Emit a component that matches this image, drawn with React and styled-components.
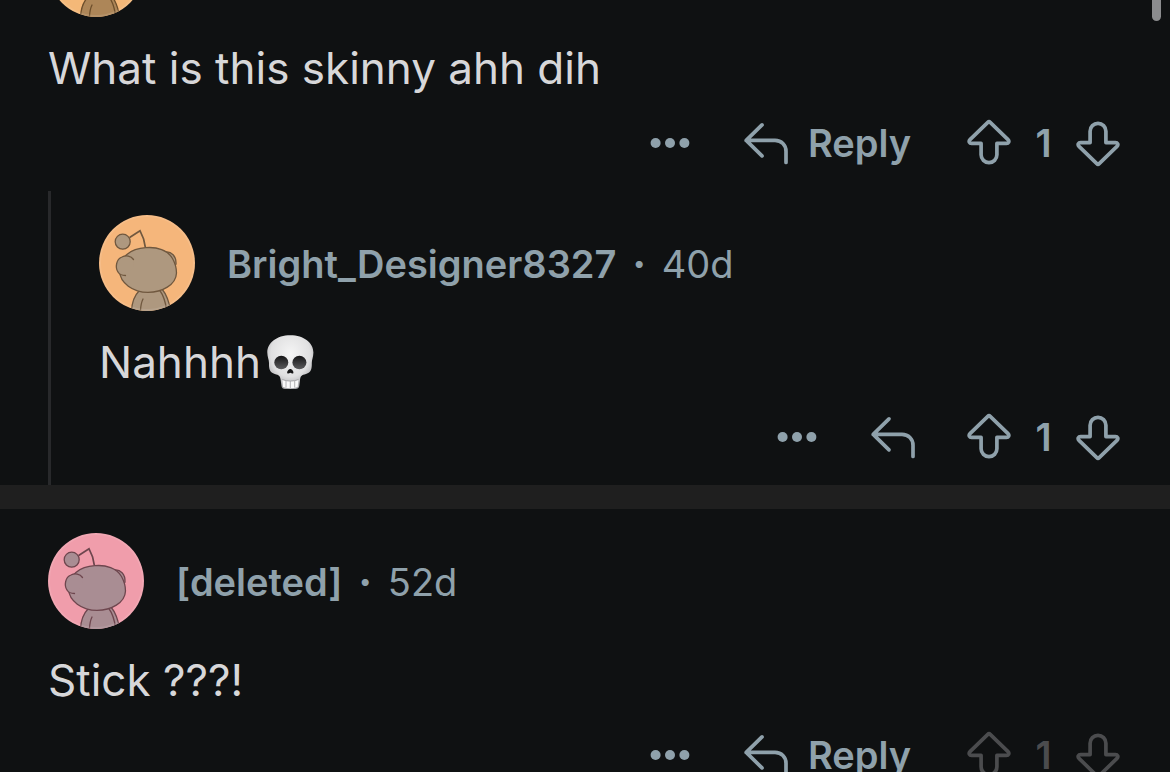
import React from "react";
import styled, { createGlobalStyle } from "styled-components";

const GlobalStyle = createGlobalStyle`
  * {
    box-sizing: border-box;
  }
  body {
    margin: 0;
    background: #0f1112;
    font-family: Inter, "Liberation Sans", sans-serif;
  }
`;

// page
const Screen = styled.main`
  position: relative;
  height: 100vh;
  overflow: hidden;
`;

// the list is already scrolled down a little
const Feed = styled.div`
  margin-top: -103px;
`;

const ScrollThumb = styled.div`
  position: absolute;
  top: -40px;
  right: 9px;
  width: 9px;
  height: 61px;
  border-radius: 5px;
  background: #8b8c8e;
`;

const Thread = styled.section`
  padding: 0 48px;
  & + & {
    border-top: 24px solid #1f1f1f;
  }
`;

const Replies = styled.div`
  padding-left: 48px;
  border-left: 3px solid #28292b;
`;

// comment
const CommentBox = styled.article`
  padding-top: 24px;
`;

const Header = styled.header`
  display: flex;
  align-items: center;
  gap: 32px;
  height: 96px;
  color: #8fa1ab;
  font-size: 38px;
  line-height: 48px;
`;

const AvatarSvg = styled.svg`
  flex: none;
  width: 96px;
  height: 96px;
  border-radius: 50%;
`;

const Meta = styled.div`
  display: flex;
  align-items: center;
  gap: 16px;
  padding-top: 2px;
`;

const Author = styled.a`
  color: inherit;
  font-weight: 600;
  text-decoration: none;
`;

const Dot = styled.span`
  font-weight: 800;
`;

const Body = styled.p`
  display: flex;
  align-items: center;
  gap: 6px;
  margin: 24px 0 0;
  color: #d7d7d9;
  font-size: 44px;
  line-height: 54px;
`;

const SkullSvg = styled.svg`
  width: 47px;
  height: 54px;
`;

const Actions = styled.div`
  display: flex;
  align-items: center;
  justify-content: flex-end;
  gap: 48px;
  height: 96px;
`;

const ActionButton = styled.button`
  display: flex;
  align-items: center;
  gap: 18px;
  padding: 0 ${(props) => (props.$labelled ? "6px" : "0")} 0 0;
  border: 0;
  background: none;
  color: ${(props) => (props.$muted ? "#4b4c4e" : "#8fa1ab")};
  font: 600 38px/48px Inter, "Liberation Sans", sans-serif;
  cursor: pointer;
`;

const Votes = styled.div`
  display: flex;
  align-items: center;
`;

const Score = styled.span`
  width: 61px;
  color: ${(props) => (props.$muted ? "#4b4c4e" : "#8fa1ab")};
  font-size: 38px;
  font-weight: 600;
  line-height: 48px;
  text-align: center;
`;

const Icon = styled.svg`
  width: 48px;
  height: 48px;
  fill: none;
  stroke: currentColor;
  stroke-width: 3.7;
  stroke-linecap: round;
  stroke-linejoin: round;
`;

const ARROW =
  "M22.8 3.3 L5 20.6 C3.3 22.3 4.4 24.4 6.6 24.4 H16.1 V35.8 A7.9 7.9 0 0 0 31.9 35.8 V24.4 H41.4 C43.6 24.4 44.7 22.3 43 20.6 L25.2 3.3 Q24 2.1 22.8 3.3 Z";

function UpIcon() {
  return (
    <Icon viewBox="0 0 48 48">
      <path d={ARROW} />
    </Icon>
  );
}

function DownIcon() {
  return (
    <Icon viewBox="0 0 48 48">
      <path d={ARROW} transform="rotate(180 24 24)" />
    </Icon>
  );
}

function ReplyIcon() {
  return (
    <Icon viewBox="0 0 48 48">
      <path d="M20 5.9 L4.2 21.4 L20 36.9 M4.2 21.4 H33 C39.5 21.4 44 26 44 32.2 V43.4" />
    </Icon>
  );
}

function MoreIcon() {
  return (
    <Icon viewBox="0 0 48 48">
      <g fill="currentColor" stroke="none">
        <circle cx="9.6" cy="24" r="5" />
        <circle cx="24" cy="24" r="5" />
        <circle cx="38.4" cy="24" r="5" />
      </g>
    </Icon>
  );
}

const palettes = {
  amber: { back: "#f4b878", skin: "#ad8658", line: "#6d4f2c" },
  orange: { back: "#f5b67b", skin: "#ae987f", line: "#70583f" },
  pink: { back: "#f09dab", skin: "#a98d93", line: "#6e464e" },
};

function Avatar({ palette }) {
  const { back, skin, line } = palettes[palette];
  return (
    <AvatarSvg viewBox="0 0 96 96" role="img" aria-label="Avatar">
      <rect width="96" height="96" fill={back} />
      <g fill={skin} stroke={line} strokeWidth="1.3" strokeLinecap="round">
        <path d="M31 22.3 L41 15.7 L44.6 24 L46.7 34" fill="none" strokeWidth="1.7" />
        <circle cx="23.7" cy="26.7" r="7.5" />
        <path d="M40 76 C34 82 32.6 89 32.4 98 H72 C70.5 88 68 80 63 74 Z" />
        <path d="M60.5 75 C65 81 67 88 68 98" fill="none" />
        <path d="M44 84 C42 88 41.5 92 41.3 98" fill="none" />
        <path d="M67 37 C72 36.5 77.5 41 77 49 L74 54 Z" />
        <path d="M46.7 32.7 C58 31.5 69 35.5 73.5 43.5 C76 48 77.5 53 77.5 58 C77 70 63 77.3 49 77.3 C34 77.3 21 68 20.5 56 C20 42 32 33.5 46.7 32.7 Z" />
        <path
          d="M34.5 44.5 C32 41 27 40 23 42 C17 44 16 53 19 57 C20.5 59.5 23 60.5 26.5 60.5 L34 53 Z"
          stroke="none"
        />
        <path
          d="M34.5 44.5 C32 41 27 40 23 42 C17 44 16 53 19 57 C20.5 59.5 23 60.5 26.5 60.5"
          fill="none"
        />
      </g>
      <circle cx="48" cy="48" r="47" fill="none" stroke="#fff" strokeOpacity="0.1" strokeWidth="2" />
    </AvatarSvg>
  );
}

function Skull() {
  return (
    <SkullSvg viewBox="0 0 47 54" role="img" aria-label="skull">
      <defs>
        <radialGradient id="bone" cx="0.5" cy="0.35" r="0.65">
          <stop offset="0" stopColor="#f5f5f5" />
          <stop offset="0.65" stopColor="#e0e0e1" />
          <stop offset="1" stopColor="#a4a4a7" />
        </radialGradient>
        <linearGradient id="socket" x1="0" y1="0" x2="0" y2="1">
          <stop offset="0" stopColor="#151516" />
          <stop offset="1" stopColor="#5b5b5d" />
        </linearGradient>
      </defs>
      <path
        d="M23.3 0.3 C37 0.3 46.4 8 46.4 17.5 C46.4 22 44.8 24.5 44.8 28 C45 34 44 37.5 39 39 C34.5 40 33.5 41 33 45 L32.3 51 C32 53 30.5 54 28.5 54 H18 C16 54 14.7 53 14.5 51 L13.7 45 C13.2 41 12 40 7.8 39 C2.8 37.5 1.8 34 2 28 C2 24.5 0.3 22 0.3 17.5 C0.3 8 9.7 0.3 23.3 0.3 Z"
        fill="url(#bone)"
      />
      <ellipse cx="14.3" cy="27.5" rx="7" ry="6.7" fill="url(#socket)" />
      <ellipse cx="32.4" cy="27.5" rx="7" ry="6.7" fill="url(#socket)" />
      <path
        d="M23.3 34 C25 34 26.8 36.5 26.4 38 C26 39 24.5 38.5 23.3 37.8 C22.2 38.5 20.6 39 20.2 38 C19.8 36.5 21.7 34 23.3 34 Z"
        fill="#171718"
      />
      <path d="M15.5 44.7 C20 46.7 27 46.7 31.3 44.7 L30.7 52 C26 53.7 21 53.7 16 52 Z" fill="#fafafa" />
      <path
        d="M15.2 44.5 C20 46.5 27 46.5 31.5 44.5 M19 46 V52.5 M23.3 46 V53 M27.7 46 V52.5"
        fill="none"
        stroke="#a0a0a2"
        strokeWidth="0.8"
      />
    </SkullSvg>
  );
}

function Comment({ palette, author, age, label, muted, children }) {
  return (
    <CommentBox>
      <Header>
        <Avatar palette={palette} />
        {author && (
          <Meta>
            <Author href="#">{author}</Author>
            <Dot>·</Dot>
            <span>{age}</span>
          </Meta>
        )}
      </Header>
      <Body>{children}</Body>
      <Actions>
        <ActionButton aria-label="More">
          <MoreIcon />
        </ActionButton>
        <ActionButton aria-label="Reply" $labelled={label}>
          <ReplyIcon />
          {label}
        </ActionButton>
        <Votes>
          <ActionButton aria-label="Upvote" $muted={muted}>
            <UpIcon />
          </ActionButton>
          <Score $muted={muted}>1</Score>
          <ActionButton aria-label="Downvote" $muted={muted}>
            <DownIcon />
          </ActionButton>
        </Votes>
      </Actions>
    </CommentBox>
  );
}

function App() {
  return (
    <>
      <GlobalStyle />
      <Screen>
        <Feed>
          <Thread>
            <Comment palette="amber" label="Reply">
              What is this skinny ahh dih
            </Comment>
            <Replies>
              <Comment palette="orange" author="Bright_Designer8327" age="40d">
                Nahhhh
                <Skull />
              </Comment>
            </Replies>
          </Thread>
          <Thread>
            <Comment palette="pink" author="[deleted]" age="52d" label="Reply" muted>
              Stick ???!
            </Comment>
          </Thread>
        </Feed>
        <ScrollThumb />
      </Screen>
    </>
  );
}

export default App;
